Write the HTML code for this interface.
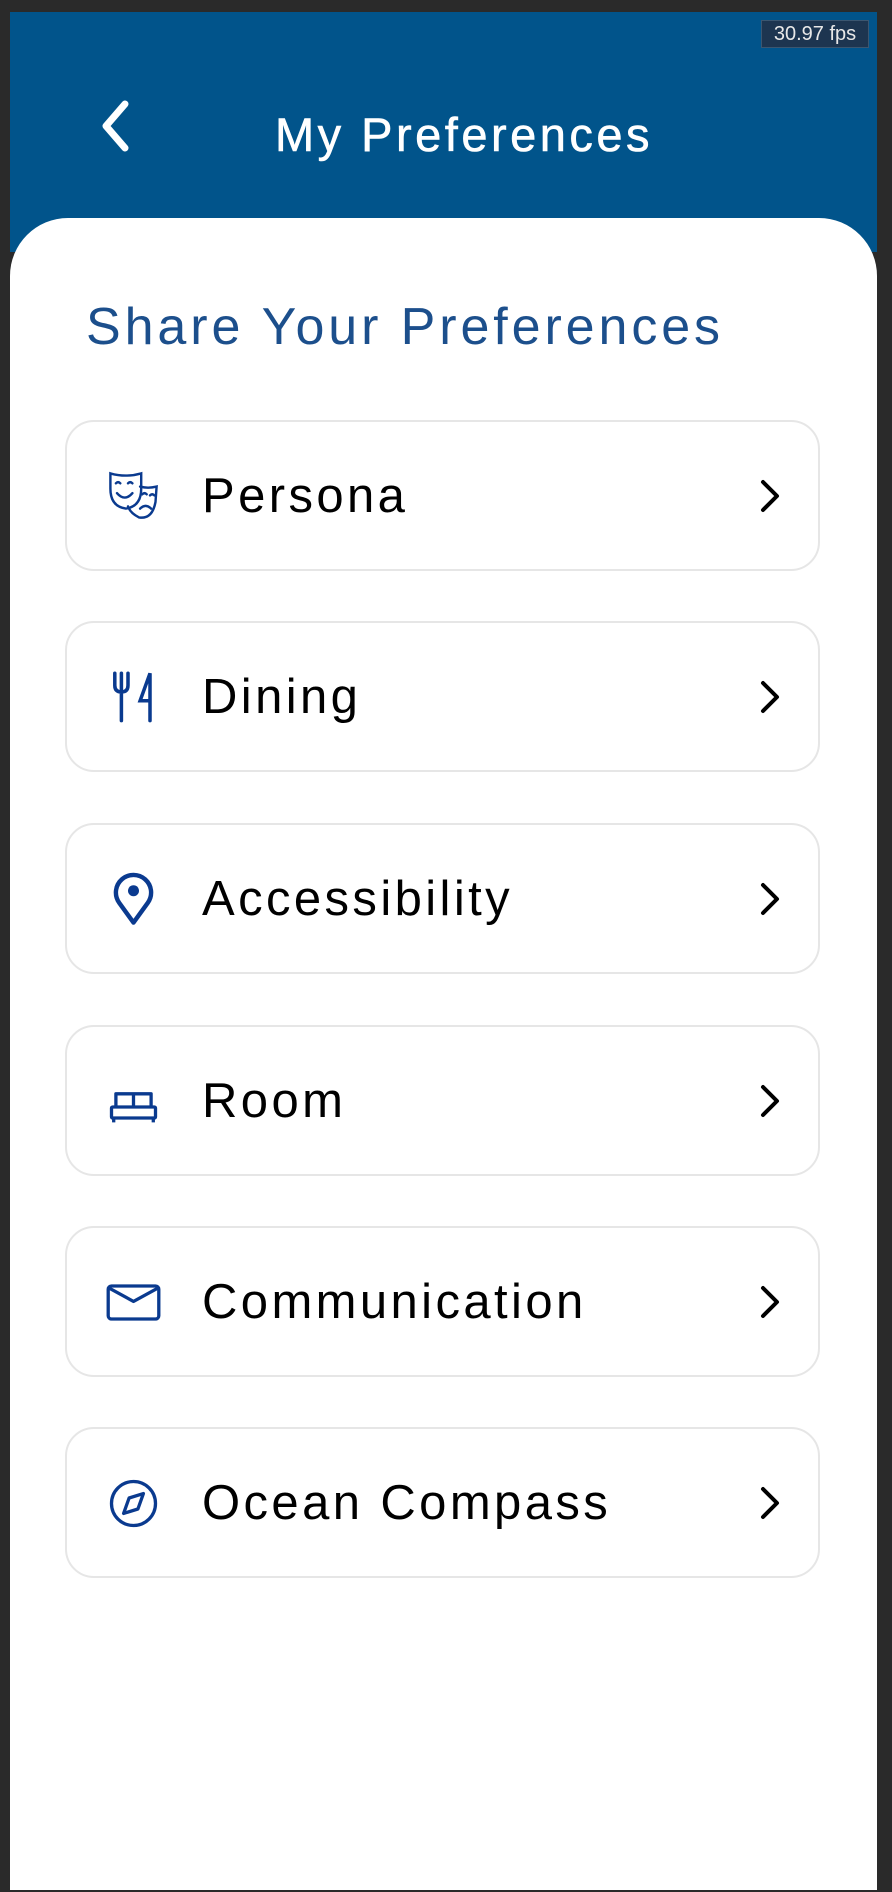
<!DOCTYPE html>
<html><head><meta charset="utf-8"><style>
*{margin:0;padding:0;box-sizing:border-box}
body{width:892px;height:1892px;background:#2a2a2a;position:relative;overflow:hidden;font-family:"Liberation Sans",sans-serif}
.hdr{position:absolute;left:10px;top:12px;width:867px;height:240px;background:#01548B}
.fps{position:absolute;left:761px;top:20px;width:108px;height:28px;background:#1d3550;border:1px solid #3b5670;color:#e8e8e8;font-size:20px;line-height:26px;text-align:center}
.title{position:absolute;left:0;width:928px;top:106px;text-align:center;color:#fff;font-size:47px;letter-spacing:3.5px;line-height:58px;-webkit-text-stroke:0.6px #fff}
.panel{position:absolute;left:10px;top:218px;width:867px;height:1672px;background:#fff;border-radius:58px 58px 0 0}
.h2{position:absolute;left:86px;top:296px;color:#1c4f8c;font-size:52px;letter-spacing:3.9px;line-height:62px}
.card{position:absolute;left:65px;width:755px;height:151px;border:2px solid #e6e6e6;border-radius:29px}
.card span{position:absolute;left:135px;top:45px;font-size:49px;letter-spacing:3.4px;line-height:58px;color:#000}
.card svg.ic{position:absolute;left:39px;top:47px;width:55px;height:55px}
.card svg.ch{position:absolute;left:691px;top:56px;width:24px;height:36px}
</style></head><body>
<div class="hdr"></div>
<div class="fps">30.97 fps</div>
<svg style="position:absolute;left:97px;top:100px" width="36" height="52" viewBox="0 0 36 52"><path d="M28 4 L9 26 L28 48" fill="none" stroke="#fff" stroke-width="7" stroke-linecap="round" stroke-linejoin="round"/></svg>
<div class="title">My Preferences</div>
<div class="panel"></div>
<div class="h2">Share Your Preferences</div>

<div class="card" style="top:420px"><svg class="ic" viewBox="0 0 50 50" fill="none" stroke="#0a3a8f" stroke-width="2.2" stroke-linecap="round"><path d="M4 4 Q18 8 32 4 L32 18 Q32 34 18 36 Q4 34 4 18 Z"/><path d="M9 13 q2 -2 4 0 M20 13 q2 -2 4 0 M10 22 q7 8 14 0"/><path d="M31 16 Q38 18 46 16 L45 30 Q42 46 30 44 Q22 40 20 34"/><path d="M33 23 q2 -2 4 0 M40 24 q2 -2 4 0 M31 36 q5 -5 10 0"/></svg><span>Persona</span><svg class="ch" viewBox="0 0 24 36"><path d="M5 4 L19 18 L5 32" fill="none" stroke="#000" stroke-width="4" stroke-linecap="round" stroke-linejoin="round"/></svg></div>

<div class="card" style="top:621px"><svg class="ic" viewBox="0 0 50 50" fill="none" stroke="#0a3a8f" stroke-width="3.2" stroke-linecap="round"><path d="M8 3 V14 Q8 20 14 20 Q20 20 20 14 V3 M14 3 V46"/><path d="M40 46 V3 L31 28 H40"/></svg><span>Dining</span><svg class="ch" viewBox="0 0 24 36"><path d="M5 4 L19 18 L5 32" fill="none" stroke="#000" stroke-width="4" stroke-linecap="round" stroke-linejoin="round"/></svg></div>

<div class="card" style="top:823px"><svg class="ic" viewBox="0 0 50 50"><path d="M25 46 L12 28 A16 16 0 1 1 38 28 Z" fill="none" stroke="#0a3a8f" stroke-width="4" stroke-linejoin="round"/><circle cx="25" cy="17" r="5" fill="#0a3a8f"/></svg><span>Accessibility</span><svg class="ch" viewBox="0 0 24 36"><path d="M5 4 L19 18 L5 32" fill="none" stroke="#000" stroke-width="4" stroke-linecap="round" stroke-linejoin="round"/></svg></div>

<div class="card" style="top:1025px"><svg class="ic" viewBox="0 0 50 50" fill="none" stroke="#0a3a8f" stroke-width="3" stroke-linejoin="round"><path d="M9 30 V18 H41 V30 M25 18 V30"/><rect x="5" y="30" width="40" height="10" rx="1"/><path d="M7 40 V44 M43 40 V44"/></svg><span>Room</span><svg class="ch" viewBox="0 0 24 36"><path d="M5 4 L19 18 L5 32" fill="none" stroke="#000" stroke-width="4" stroke-linecap="round" stroke-linejoin="round"/></svg></div>

<div class="card" style="top:1226px"><svg class="ic" viewBox="0 0 50 50" fill="none" stroke="#0a3a8f" stroke-width="3" stroke-linejoin="round"><rect x="2" y="10" width="46" height="30" rx="3"/><path d="M3 12 L25 24 L47 12"/></svg><span>Communication</span><svg class="ch" viewBox="0 0 24 36"><path d="M5 4 L19 18 L5 32" fill="none" stroke="#000" stroke-width="4" stroke-linecap="round" stroke-linejoin="round"/></svg></div>

<div class="card" style="top:1427px"><svg class="ic" viewBox="0 0 50 50" fill="none" stroke="#0a3a8f" stroke-width="3" stroke-linejoin="round"><circle cx="25" cy="25" r="20"/><path d="M16 34 L21 20 L34 16 L29 30 Z"/></svg><span>Ocean Compass</span><svg class="ch" viewBox="0 0 24 36"><path d="M5 4 L19 18 L5 32" fill="none" stroke="#000" stroke-width="4" stroke-linecap="round" stroke-linejoin="round"/></svg></div>
</body></html>
